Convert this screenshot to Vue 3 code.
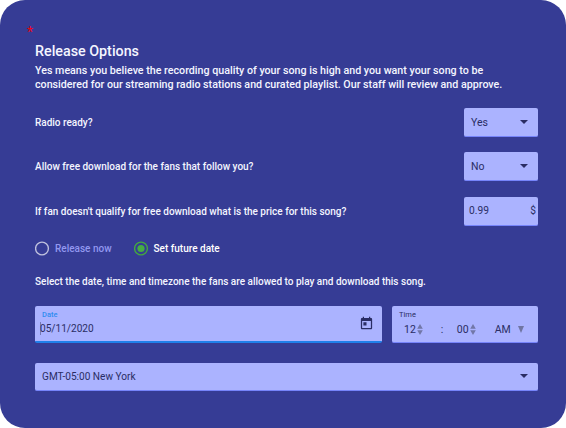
<script setup>
import { ref } from 'vue';

const radioReady = ref('Yes');
const freeDownload = ref('No');
const price = ref('0.99');
const release = ref('future');
const date = ref('05/11/2020');
const timezone = ref('GMT-05:00 New York');

const releaseModes = [
  { value: 'now', label: 'Release now' },
  { value: 'future', label: 'Set future date' }
];
</script>

<template>
  <div class="card">
    <span class="required">*</span>
    <h2 class="title">Release Options</h2>
    <p class="intro">
      Yes means you believe the recording quality of your song is high and you want your song to be<br />
      considered for our streaming radio stations and curated playlist. Our staff will review and approve.
    </p>

    <div class="option">
      <span class="label">Radio ready?</span>
      <div class="field small">
        <span>{{ radioReady }}</span>
        <svg class="arrow" viewBox="0 0 8 4"><path d="M0 0h8L4 4z" /></svg>
      </div>
    </div>
    <div class="option">
      <span class="label">Allow free download for the fans that follow you?</span>
      <div class="field small">
        <span>{{ freeDownload }}</span>
        <svg class="arrow" viewBox="0 0 8 4"><path d="M0 0h8L4 4z" /></svg>
      </div>
    </div>
    <div class="option">
      <span class="label">If fan doesn't qualify for free download what is the price for this song?</span>
      <div class="field small price">
        <span>{{ price }}</span>
        <span>$</span>
      </div>
    </div>

    <div class="radios">
      <div
        v-for="mode in releaseModes"
        :key="mode.value"
        class="radio"
        :class="{ checked: release === mode.value }"
        @click="release = mode.value"
      >
        <svg class="circle" viewBox="0 0 15 15">
          <circle class="ring" cx="7" cy="7.5" r="6.4" />
          <circle v-if="release === mode.value" class="dot" cx="7" cy="7.5" r="3.6" />
        </svg>
        <span>{{ mode.label }}</span>
      </div>
    </div>

    <p class="hint">Select the date, time and timezone the fans are allowed to play and download this song.</p>

    <div class="when">
      <div class="field date">
        <div class="date-text">
          <span class="caption">Date</span>
          <span class="date-value">{{ date }}</span>
        </div>
        <svg class="calendar" viewBox="0 0 24 24">
          <path d="M19 3h-1V1h-2v2H8V1H6v2H5c-1.1 0-2 .9-2 2v14c0 1.1.9 2 2 2h14c1.1 0 2-.9 2-2V5c0-1.1-.9-2-2-2zm0 16H5V8h14v11zM7 10h5v5H7z" />
        </svg>
      </div>
      <div class="field time">
        <span class="caption">Time</span>
        <div class="time-row">
          <span>12</span>
          <svg class="spin" viewBox="0 0 6 11"><path d="M3 0l2.8 4.7H.2zM3 11l2.8-4.7H.2z" /></svg>
          <span class="colon">:</span>
          <span>00</span>
          <svg class="spin" viewBox="0 0 6 11"><path d="M3 0l2.8 4.7H.2zM3 11l2.8-4.7H.2z" /></svg>
          <span class="ampm">AM</span>
          <svg class="down" viewBox="0 0 6 7"><path d="M0 0h6L3 7z" /></svg>
        </div>
      </div>
    </div>

    <div class="field zone">
      <span>{{ timezone }}</span>
      <svg class="arrow" viewBox="0 0 8 4"><path d="M0 0h8L4 4z" /></svg>
    </div>
  </div>
</template>

<style>
body {
  background: #fff;
}
</style>

<style scoped>
.card {
  position: relative;
  box-sizing: border-box;
  width: 566px;
  height: 428px;
  padding: 42px 28px 0 35px;
  border-radius: 25px;
  background: #363c95;
  color: #f4f5ff;
  font-family: Roboto, "Liberation Sans", sans-serif;
  font-size: 10px;
  font-weight: 500;
  white-space: nowrap;
}

/* required marker in the card corner */
.required {
  position: absolute;
  left: 27px;
  top: 24px;
  color: #f00010;
  font-size: 14px;
  line-height: 16px;
  font-weight: 400;
}

.title {
  margin: 0;
  font-size: 14.3px;
  font-weight: 500;
  line-height: 18px;
}

.intro {
  margin: 4px 0 17px;
  font-size: 10.7px;
  line-height: 13.5px;
}

.option {
  display: flex;
  justify-content: space-between;
  align-items: center;
  height: 29px;
  margin-bottom: 15.3px;
}

.field {
  box-sizing: border-box;
  display: flex;
  border-radius: 2px;
  border-bottom: 1px solid #7684fa;
  background: #abb3ff;
  color: #2a2d64;
  font-weight: 400;
  font-size: 10.5px;
}

.small {
  width: 74px;
  height: 29px;
  padding: 0 10px 0 7px;
  align-items: center;
  justify-content: space-between;
}

.price {
  padding: 0 2px 0 5px;
  font-size: 10.2px;
}

.arrow {
  width: 8px;
  height: 4px;
  fill: #2a2d64;
}

.radios {
  display: flex;
  height: 16px;
  align-items: center;
}

.radio {
  display: flex;
  align-items: center;
  color: #9298f0;
}

.radio:first-child {
  width: 98.5px;
}

.circle {
  width: 15px;
  height: 15px;
  margin-right: 5px;
}

.ring {
  fill: none;
  stroke: #bfc1de;
  stroke-width: 1.4;
}

.dot {
  fill: #46ad43;
}

.checked {
  color: #fff;
}

.checked .ring {
  stroke: #43a83f;
}

.hint {
  margin: 17px 0 16px;
  line-height: 16px;
}

.when {
  display: flex;
  gap: 10px;
  height: 37px;
  margin-bottom: 20px;
}

.caption {
  font-size: 7.5px;
  line-height: 9px;
}

.date {
  width: 347px;
  border-bottom: 2px solid #2080ea;
  justify-content: space-between;
  align-items: center;
  padding: 0 8px 0 5px;
}

.date-text {
  display: flex;
  flex-direction: column;
  align-self: flex-start;
  padding-top: 4px;
}

.date .caption {
  padding-left: 2px;
  color: #2f8cf0;
  font-weight: 500;
}

.date-value {
  margin-top: 3px;
  border-left: 1px solid #7479b4;
  font-size: 10.1px;
  line-height: 13px;
  text-indent: -1px;
}

.calendar {
  width: 15px;
  height: 15px;
  fill: #2a2d64;
}

.time {
  width: 146px;
  flex-direction: column;
  padding: 4px 0 0 7px;
}

.time-row {
  display: flex;
  align-items: center;
  margin-top: 4px;
  padding-left: 5px;
  line-height: 14px;
}

.spin {
  width: 6px;
  height: 11px;
  margin-left: 1px;
  fill: #7277a8;
}

.colon {
  width: 16px;
  padding-left: 18px;
}

.ampm {
  margin-left: 19px;
}

.down {
  width: 6px;
  height: 7px;
  margin-left: 7px;
  fill: #7075a3;
}

.zone {
  height: 28px;
  width: 503px;
  padding: 0 10px 0 7px;
  align-items: center;
  justify-content: space-between;
  font-size: 10.1px;
}
</style>
